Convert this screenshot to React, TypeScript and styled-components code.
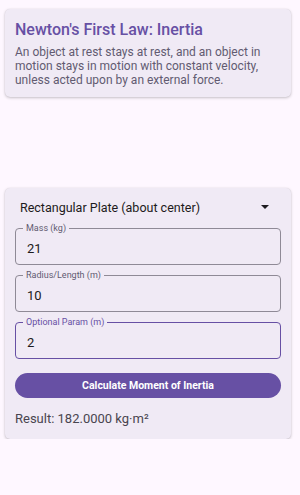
import React, { useState } from "react";
import styled, { createGlobalStyle } from "styled-components";

const Global = createGlobalStyle`
  html, body {
    margin: 0;
    padding: 0;
    background: #fef7ff;
    font-family: Roboto, "Noto Sans", sans-serif;
  }
`;

const Page = styled.div`
  padding: 9px 0 0 5px;
  display: flex;
  flex-direction: column;
  gap: 91px;
`;

const Card = styled.div`
  width: 286px;
  box-sizing: border-box;
  padding: 10px;
  background: #f0eaf5;
  border-radius: 5px;
  box-shadow: 0 1px 3px rgba(0, 0, 0, 0.22), 0 0 1px rgba(0, 0, 0, 0.12);
`;

const Title = styled.h2`
  margin: 0;
  font-size: 16px;
  line-height: 22px;
  font-weight: 500;
  color: #6750a4;
`;

const Body = styled.p`
  margin: 4px 0 0;
  font-size: 12px;
  line-height: 14px;
  color: #625b71;
`;

const Form = styled.div`
  display: flex;
  flex-direction: column;
`;

const Select = styled.div`
  display: flex;
  align-items: center;
  justify-content: space-between;
  height: 18px;
  padding: 0 12px 0 5px;
  margin-bottom: 8px;
  font-size: 12.5px;
  color: #1d1b20;
`;

const Fields = styled.div`
  display: flex;
  flex-direction: column;
  gap: 6px;
`;

const Field = styled.fieldset<{ $focused?: boolean }>`
  display: block;
  margin: 0;
  min-width: 0;
  height: 41px;
  box-sizing: border-box;
  padding: 0 10px;
  border: ${(p) => (p.$focused ? "1.5px solid #6750a4" : "1px solid #8f8a96")};
  border-radius: 4px;
`;

const Legend = styled.legend<{ $focused?: boolean }>`
  padding: 0 3px;
  margin-left: -3px;
  font-size: 9px;
  line-height: 9px;
  color: ${(p) => (p.$focused ? "#6750a4" : "#625b71")};
`;

const Input = styled.input`
  display: block;
  border: none;
  background: transparent;
  outline: none;
  width: 100%;
  height: 16px;
  padding: 0;
  margin: 7px 0 0 1px;
  font-family: inherit;
  font-size: 13px;
  color: #1d1b20;
  caret-color: #6750a4;
`;

const Button = styled.button`
  margin-top: 14px;
  height: 25px;
  border: none;
  border-radius: 13px;
  background: #6750a4;
  color: #fff;
  font-family: inherit;
  font-weight: 700;
  font-size: 10.5px;
`;

const Result = styled.div`
  margin-top: 13px;
  font-size: 13px;
  line-height: 16px;
  color: #49454f;
  padding-bottom: 2px;
`;

function Caret() {
  return (
    <svg width="8" height="4" viewBox="0 0 8 4">
      <path d="M0 0h8L4 4z" fill="#1d1b20" />
    </svg>
  );
}

export default function App() {
  const [mass, setMass] = useState("21");
  const [len, setLen] = useState("10");
  const [opt, setOpt] = useState("2");

  return (
    <Page>
      <Global />
      <Card>
        <Title>Newton's First Law: Inertia</Title>
        <Body>
          An object at rest stays at rest, and an object in motion stays in
          motion with constant velocity, unless acted upon by an external
          force.
        </Body>
      </Card>
      <Card>
        <Form>
          <Select>
            <span>Rectangular Plate (about center)</span>
            <Caret />
          </Select>
          <Fields>
            <Field>
              <Legend>Mass (kg)</Legend>
              <Input value={mass} onChange={(e) => setMass(e.target.value)} />
            </Field>
            <Field>
              <Legend>Radius/Length (m)</Legend>
              <Input value={len} onChange={(e) => setLen(e.target.value)} />
            </Field>
            <Field $focused>
              <Legend $focused>Optional Param (m)</Legend>
              <Input
                autoFocus
                value={opt}
                onChange={(e) => setOpt(e.target.value)}
              />
            </Field>
          </Fields>
          <Button>Calculate Moment of Inertia</Button>
          <Result>Result: 182.0000 kg·m²</Result>
        </Form>
      </Card>
    </Page>
  );
}
